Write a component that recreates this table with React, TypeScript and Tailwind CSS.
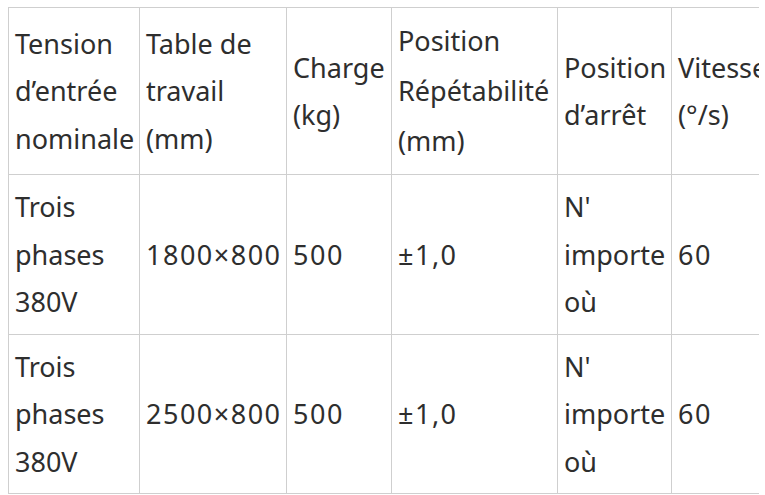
const rows = [
  ['Trois phases 380V', '1800×800', '500', '±1,0', "N' importe où", '60'],
  ['Trois phases 380V', '2500×800', '500', '±1,0', "N' importe où", '60'],
];

const cell = 'border border-[#cfcfcf] px-[6px] py-[8px] align-middle text-left font-normal';

// numeric columns: the source font has wider figures
const numeric = [1, 2, 3, 5];

export default function App() {
  return (
    <div className="min-h-screen bg-white pl-[8px] pt-[7px]">
      <div className="w-[751px] overflow-hidden">
        <table
          className="table-fixed border-collapse text-[27px] leading-[47.5px] text-[#2e2e2e]"
          style={{ width: 793, fontFamily: '"Noto Sans", "Open Sans", sans-serif' }}
        >
          <colgroup>
            <col className="w-[131px]" />
            <col className="w-[147px]" />
            <col className="w-[105px]" />
            <col className="w-[166px]" />
            <col className="w-[114px]" />
            <col className="w-[130px]" />
          </colgroup>
          <thead>
            <tr>
              <th className={cell}>Tension d’entrée nominale</th>
              <th className={cell}>Table de travail (mm)</th>
              <th className={cell}>Charge (kg)</th>
              <th className={`${cell} leading-[50px]`}>Position Répétabilité (mm)</th>
              <th className={cell}>Position d’arrêt</th>
              <th className={`${cell} whitespace-nowrap`}>
                Vitesse
                <br />
                (°/s)
              </th>
            </tr>
          </thead>
          <tbody>
            {rows.map((r, i) => (
              <tr key={i}>
                {r.map((v, j) => (
                  <td
                    key={j}
                    className={`${cell} ${numeric.includes(j) ? 'whitespace-nowrap tracking-[1.5px]' : ''}`}
                  >
                    {v}
                  </td>
                ))}
              </tr>
            ))}
          </tbody>
        </table>
      </div>
    </div>
  );
}
